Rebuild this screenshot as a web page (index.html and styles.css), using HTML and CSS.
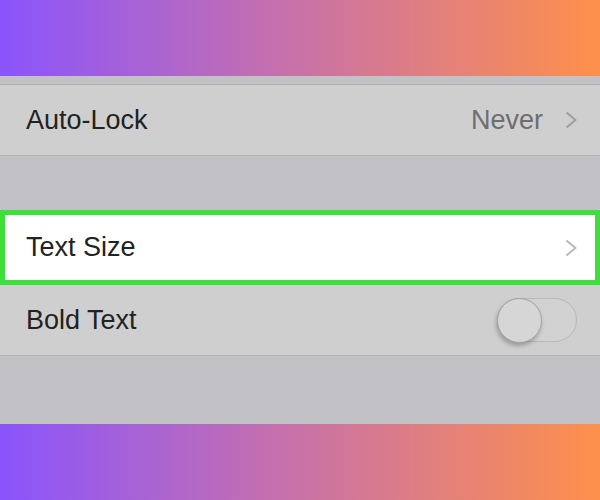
FILE: index.html
```html
<!DOCTYPE html>
<html lang="en">
<head>
    <meta charset="UTF-8">
    <title>Display &amp; Brightness</title>
    <link rel="stylesheet" href="styles.css">
</head>
<body>
<div class="band"></div>
<div class="settings">
    <div class="spacer top"></div>
    <div class="row bordered">
        <span class="label">Auto-Lock</span>
        <span class="detail">
            <span class="value">Never</span>
            <svg class="chevron" width="12" height="18" viewBox="0 0 12 18">
                <polyline points="1.5,1.5 10.5,9 1.5,16.5" fill="none" stroke="#9b9b9d" stroke-width="1.7"/>
            </svg>
        </span>
    </div>
    <div class="spacer mid"></div>
    <div class="row highlight">
        <span class="label">Text Size</span>
        <span class="detail">
            <svg class="chevron" width="12" height="18" viewBox="0 0 12 18">
                <polyline points="1.5,1.5 10.5,9 1.5,16.5" fill="none" stroke="#b4b4b6" stroke-width="1.7"/>
            </svg>
        </span>
    </div>
    <div class="row bordered">
        <span class="label">Bold Text</span>
        <span class="toggle"><span class="knob"></span></span>
    </div>
    <div class="spacer bottom"></div>
</div>
<div class="band"></div>
</body>
</html>
```
FILE: styles.css
```css
body {
    margin: 0;
    width: 600px;
    height: 500px;
    overflow: hidden;
    font-family: "Liberation Sans", Arial, sans-serif;
    background: #c2c1c6;
}

.band {
    height: 76px;
    background: linear-gradient(to right, #8a54fd, #c46fb0 45%, #fe904b);
}

.settings {
    background: #c2c1c6;
}

.spacer.top {
    height: 8px;
    border-bottom: 1px solid #adadaf;
}

.spacer.mid {
    height: 54px;
}

.spacer.bottom {
    height: 68px;
}

.row {
    display: flex;
    align-items: center;
    justify-content: space-between;
    height: 70px;
    padding: 0 23px 0 26px;
    background: #cfcfcf;
    font-size: 27px;
    color: #222222;
}

.row.bordered {
    border-bottom: 1px solid #b3b2b5;
}

.row.highlight {
    height: 65px;
    padding: 0 18px 0 21px;
    background: #ffffff;
    border: 5px solid #3de03b;
}

.detail {
    display: flex;
    align-items: center;
    gap: 22px;
}

.value {
    color: #6e6e70;
}

.chevron {
    display: block;
}

.toggle {
    position: relative;
    width: 78px;
    height: 42px;
    border: 1px solid #b9b9bb;
    border-radius: 22px;
    background: #d2d2d2;
}

.knob {
    position: absolute;
    left: -1px;
    top: -1px;
    width: 45px;
    height: 45px;
    box-sizing: border-box;
    border-radius: 50%;
    border: 1px solid #a4a4a6;
    background: #d6d6d6;
    box-shadow: -1px 3px 4px rgba(0, 0, 0, 0.25);
}
```
